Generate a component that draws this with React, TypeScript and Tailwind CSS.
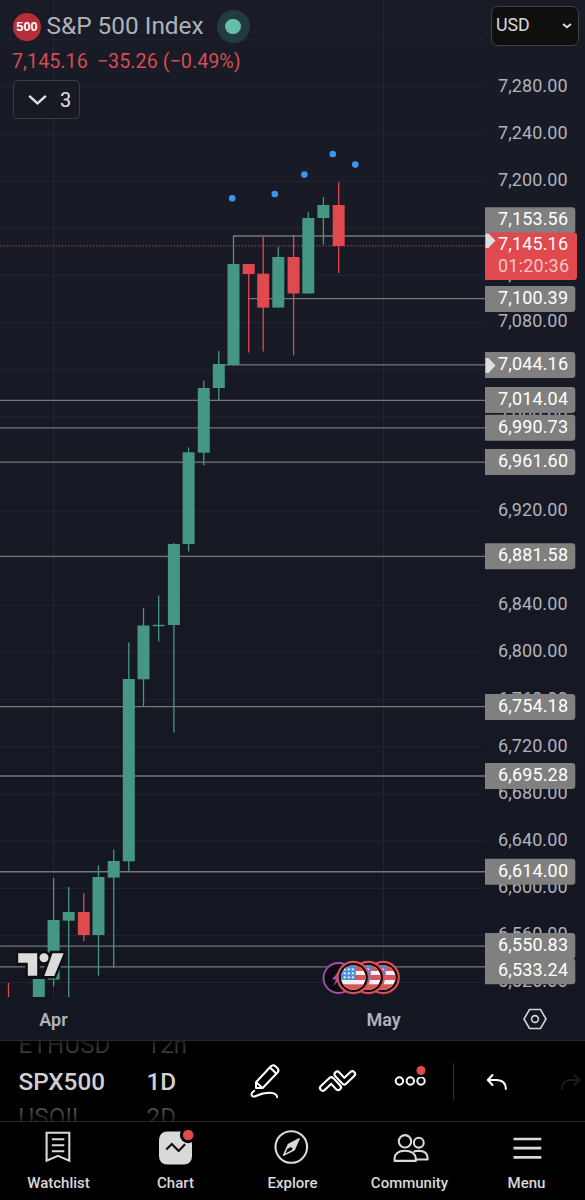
import type { ReactNode } from "react";

const UP = "#459782";
const DOWN = "#e0494e";

// price -> y on the plot
const priceY = (price: number) => 87 + (7280 - price) * 1.1783;

const ticks = Array.from({ length: 20 }, (_, i) => 7280 - i * 40);

// x, high, body top, body bottom, low, falling
type Candle = [number, number, number, number, number, boolean?];

const candles: Candle[] = [
  [8.5, 983, 983, 983, 997, true],
  [38.8, 979, 979, 997, 997],
  [53.6, 878, 920, 979.6, 986.5],
  [68.7, 887, 912, 920.7, 997],
  [83.8, 893, 912, 935, 941, true],
  [98.5, 865.5, 877, 935, 975.5],
  [113.7, 849.5, 861, 877.6, 967.5],
  [128.8, 642.5, 679, 861.3, 871],
  [143.5, 608, 625.5, 679.3, 706],
  [158.7, 595.5, 624.8, 626.2, 641.5],
  [173.9, 543, 544, 625, 732.5],
  [188.6, 447.5, 452.3, 544, 551.5],
  [203.8, 380.5, 388, 452.7, 465.5],
  [218.8, 351, 364, 388, 400.5],
  [233.5, 236, 264, 365, 366],
  [248.7, 264, 264, 274, 352.5, true],
  [263.2, 236.5, 273.7, 307.6, 351.5, true],
  [278.3, 247, 257, 307.6, 307.6],
  [293.6, 235, 257, 293.5, 355.3, true],
  [308.3, 212, 218, 293.5, 293.5],
  [323.4, 197, 205, 218, 244.5],
  [338.7, 182.3, 205, 246, 273, true],
];

// price, label top, line start
const levels: [number, number, number][] = [
  [7153.56, 207.3, 233],
  [7100.39, 286, 248],
  [7044.16, 352, 221],
  [7014.04, 387, 0],
  [6990.73, 414.7, 0],
  [6961.6, 449, 0],
  [6881.58, 543.3, 0],
  [6754.18, 694, 0],
  [6695.28, 763, 0],
  [6614, 858.8, 0],
  [6550.83, 933, 0],
  [6533.24, 958.3, 0],
];

const dots = [
  [232.2, 198.2],
  [274.8, 194],
  [304.4, 174.6],
  [332.8, 154],
  [355.3, 164.6],
];

const fmt = (n: number) =>
  n.toLocaleString("en-US", { minimumFractionDigits: 2, maximumFractionDigits: 2 });

function Flag({ x }: { x: number }) {
  return (
    <g transform={`translate(${x} 977.5)`}>
      <circle r="15.6" fill="#0b0b0f" stroke="#dc4f55" strokeWidth="2.1" />
      <g clipPath="url(#flag)">
        <rect x="-13" y="-13" width="26" height="26" fill="#f1f1f3" />
        <rect x="-13" y="-13" width="26" height="6.5" fill="#d9545b" />
        <rect x="-13" y="-2.5" width="26" height="5" fill="#d9545b" />
        <rect x="-13" y="6.8" width="26" height="7" fill="#d9545b" />
        <rect x="-13" y="-13" width="15.5" height="15.5" fill="#4a8fdc" />
        {[-8.7, -4.6, -0.5].map((sx) =>
          [-8.2, -4.2, -0.2].map((sy) => (
            <rect key={`${sx}${sy}`} x={sx - 1} y={sy - 0.8} width="2" height="1.8" fill="#fff" />
          ))
        )}
      </g>
    </g>
  );
}

function PriceChart() {
  return (
    <svg width="585" height="998" viewBox="0 0 585 998" className="block font-[Roboto,sans-serif]">
      <defs>
        <clipPath id="flag">
          <circle r="12.3" />
        </clipPath>
      </defs>

      <g stroke="#232631" strokeWidth="1">
        {[7320, ...ticks].map((p) => (
          <line key={p} x1="0" x2="484" y1={priceY(p)} y2={priceY(p)} />
        ))}
        <line x1="53.5" x2="53.5" y1="0" y2="997" />
        <line x1="383.5" x2="383.5" y1="0" y2="997" />
      </g>

      {levels.map(([p, , x]) => (
        <line key={p} x1={x} x2="485" y1={priceY(p)} y2={priceY(p)} stroke="#75777b" strokeWidth="1.3" />
      ))}
      <line x1="0" x2="485" y1="245.8" y2="245.8" stroke="#a44249" strokeWidth="1.3" strokeDasharray="1.3 1.8" />

      {candles.map(([x, high, top, bottom, low, falling]) => (
        <g key={x} fill={falling ? DOWN : UP}>
          <rect x={x - 0.65} y={high} width="1.3" height={low - high} />
          <rect x={x - 6} y={top} width="12" height={bottom - top} />
        </g>
      ))}

      {dots.map(([x, y]) => (
        <circle key={x} cx={x} cy={y} r="3.3" fill="#3b94f5" />
      ))}

      {/* brand mark */}
      <g stroke="#0f0f0f" strokeWidth="5">
        <path d="M18.2 953.3H37.2V975.8H27.8V962.8H18.2Z" />
        <path d="M51.7 953.3H63.5L54.2 976H44.3Z" />
        <circle cx="44" cy="957.8" r="4.5" />
      </g>
      <g fill="#dcdcdc">
        <path d="M18.2 953.3H37.2V975.8H27.8V962.8H18.2Z" />
        <path d="M52.5 953.3H63.7L54.2 976H44.3Z" />
        <circle cx="44" cy="957.8" r="4.5" />
      </g>

      {/* events */}
      <circle cx="338.5" cy="978" r="15" fill="#0b0b0f" stroke="#a450b4" strokeWidth="1.8" />
      <path d="M339 970.5L332 979.5H336L333.5 986L341 977.5H337.5Z" fill="#a450b4" />
      <Flag x={383.2} />
      <Flag x={368.3} />
      <Flag x={353.3} />

      <g fontSize="18" fill="#b0b2ba">
        {ticks.map((p) => (
          <text key={p} x="498" y={priceY(p) + 4.8} textLength="69.5">
            {fmt(p)}
          </text>
        ))}
      </g>

      {levels.map(([p, y]) => (
        <g key={p}>
          <path d={`M485 ${y}H572Q575.3 ${y} 575.3 ${y + 3}V${y + 23}Q575.3 ${y + 26} 572 ${y + 26}H485Z`} fill="#808080" />
          <text x="498" y={y + 17.8} fontSize="18" fill="#fff" textLength="70">
            {fmt(p)}
          </text>
        </g>
      ))}

      <path d="M485 232.5H574Q577 232.5 577 235.5V277Q577 280 574 280H485Z" fill={DOWN} />
      <g fontSize="18">
        <text x="498" y="250.2" fill="#fff" textLength="70">7,145.16</text>
        <text x="498" y="271.7" fill="#f5c4c6" textLength="71">01:20:36</text>
      </g>
      <path d="M485.5 233.5H488.5L495.5 240.5L488.5 248H485.5Z" fill="#dedede" />
      <path d="M485.5 358H488.5L495.5 365.5L488.5 373H485.5Z" fill="#dedede" />
    </svg>
  );
}

function Header() {
  return (
    <div className="absolute inset-x-0 top-0">
      <div className="flex h-[53px] items-center pl-[13px]">
        <div className="grid size-7 place-items-center rounded-full bg-[#b62f38] text-[12.8px] font-bold text-white">
          <span className="font-['Liberation_Sans',sans-serif]">500</span>
        </div>
        <div className="ml-[5.5px] w-[158px] text-[24.4px] leading-none whitespace-nowrap text-[#afb1b9]">
          S&amp;P 500 Index
        </div>
        <div className="ml-[12px] grid size-[33px] place-items-center rounded-full bg-[#233b40]">
          <div className="size-[15.5px] rounded-full bg-[#66bea8]" />
        </div>
      </div>
      <div className="flex h-[18px] items-center gap-[9px] pl-3 text-[19.8px] leading-none whitespace-nowrap text-[#d74b52]">
        <span>7,145.16</span>
        <span>−35.26 (−0.49%)</span>
      </div>
      <button className="mt-[9px] ml-[13px] flex h-[39px] w-[67px] items-center rounded-[5px] border border-[#3a3c43] bg-[#171a23] pl-[14px] text-[20px] text-[#e2e2e4]">
        <svg width="20" height="12" viewBox="0 0 20 12" fill="none" stroke="currentColor" strokeWidth="2.4">
          <path d="M1.2 1.8L9.5 9.3L17.8 1.8" />
        </svg>
        <span className="ml-[12px]">3</span>
      </button>
      <button className="absolute top-[6px] right-[6px] flex h-[40px] w-[88.5px] items-center justify-between rounded-[7px] border-[1.5px] border-[#414144] bg-[#0f0f0f] pr-[6px] pb-px pl-[4.5px] text-[17.8px] text-[#dbdbdb]">
        USD
        <svg width="10" height="6" viewBox="0 0 10 6" fill="none" stroke="currentColor" strokeWidth="1.9">
          <path d="M1 1L5 4.3L9 1" />
        </svg>
      </button>
    </div>
  );
}

function TimeAxis() {
  return (
    <div className="flex h-[42px] items-center text-[18px] font-semibold text-[#b0b2ba]">
      <span className="w-[107px] text-center">Apr</span>
      <span className="ml-[223px] w-[107px] text-center">May</span>
      <svg width="24" height="22" viewBox="0 0 24 22" fill="none" stroke="#d3d5da" strokeWidth="1.6" className="ml-[86px]">
        <path d="M6.5 1.5H17.5L23 11L17.5 20.5H6.5L1 11Z" />
        <circle cx="12" cy="11" r="3.4" />
      </svg>
    </div>
  );
}

function Wheel({ items, className }: { items: string[]; className: string }) {
  return (
    <div className={`flex h-20 flex-col justify-center overflow-hidden text-[24.3px] ${className}`}>
      <span className="h-[36.7px] shrink-0 bg-linear-to-b from-[#1c1c1c] from-40% to-[#5a5a5a] bg-clip-text leading-[37.7px] text-transparent">{items[0]}</span>
      <span className="h-[36.7px] shrink-0 leading-[37.7px] font-medium text-[#cfcfcf]">{items[1]}</span>
      <span className="h-[36.7px] shrink-0 bg-linear-to-b from-[#5a5a5a] from-20% to-[#1c1c1c] to-60% bg-clip-text leading-[36.7px] text-transparent">{items[2]}</span>
    </div>
  );
}

function Toolbar() {
  return (
    <div className="flex h-[82px] items-center border-y border-[#292929] bg-black">
      <Wheel items={["ETHUSD", "SPX500", "USOIL"]} className="ml-[18.5px] w-32" />
      <Wheel items={["12h", "1D", "2D"]} className="w-[95px]" />
      {/* pencil, zigzag pattern, more, undo, redo */}
      <svg width="343" height="80" viewBox="242 1041 343 80" fill="none" stroke="#fff" strokeWidth="2" strokeLinejoin="round" strokeLinecap="round">
        <path d="M256 1082.3L270.7 1066.5Q273 1064.1 275.4 1066.2L277.3 1067.9Q279.6 1070.1 277.5 1072.5L262.7 1088H256Z" />
        <path d="M256.5 1082.5L262.3 1087.7M270 1067.5L276 1073.3" />
        <path d="M254.2 1090.8Q251 1092.6 251.6 1095Q252.3 1097.6 256 1096Q263.5 1092.7 270 1092.8Q276.5 1093 277.2 1097.2" />
        <path d="M322.8 1088L331.3 1080L338.2 1087.3" strokeWidth="7.6" />
        <path d="M322.8 1088L331.3 1080L338.2 1087.3" stroke="#000" strokeWidth="3.4" />
        <path d="M337.3 1074.3L344.2 1081.7L352.3 1074" strokeWidth="7.6" />
        <path d="M337.3 1074.3L344.2 1081.7L352.3 1074" stroke="#000" strokeWidth="3.4" />
        <circle cx="399.4" cy="1081" r="3.7" />
        <circle cx="410.3" cy="1081" r="3.7" />
        <circle cx="421" cy="1081" r="3.7" />
        <circle cx="421" cy="1070.5" r="6.8" fill="#000" stroke="none" />
        <circle cx="421" cy="1070.5" r="4.5" fill={DOWN} stroke="none" />
        <path d="M453.6 1063.5V1099" stroke="#2b2b2b" strokeWidth="1.2" />
        <path d="M492.5 1075L487.8 1080L492.5 1085M488 1080H496Q505.8 1080 505.8 1089" />
        <path d="M574.5 1075L579.2 1080L574.5 1085M579 1080H571Q562 1080 562 1089" stroke="#1c1c1c" />
      </svg>
    </div>
  );
}

function NavItem({ label, children }: { label: string; children: ReactNode }) {
  return (
    <button className="flex flex-col items-center text-[15px] font-medium text-[#d9d9d9]">
      <svg width="44" height="50" viewBox="0.7 0 44 50" fill="none" stroke="currentColor" strokeWidth="2.1">
        {children}
      </svg>
      <span className="leading-[23px]">{label}</span>
    </button>
  );
}

function BottomNav() {
  return (
    <nav className="grid h-[78px] grid-cols-5 bg-black">
      <NavItem label="Watchlist">
        <path d="M10.3 10.8H33V38.7L21.7 33.8L10.3 38.7Z" />
        <path d="M15.5 17.3H28M15.5 23.3H28M15.5 29.3H28" />
      </NavItem>
      <NavItem label="Chart">
        <rect x="5.7" y="9.5" width="33" height="33" rx="8" fill="#d9d9d9" stroke="none" />
        <path d="M13 27.5L18.5 22L25.3 29L31.8 22.3" stroke="#0f0f0f" strokeWidth="2.2" />
        <circle cx="34.9" cy="13" r="8.3" fill="#000" stroke="none" />
        <circle cx="34.9" cy="13" r="5.3" fill={DOWN} stroke="none" />
      </NavItem>
      <NavItem label="Explore">
        <circle cx="21" cy="25" r="15.8" />
        <path d="M28.7 16.9L23.9 27.7L13.4 33.1L18.2 22.4Z" strokeWidth="1.6" strokeLinejoin="round" />
        <path d="M28.7 16.9L18.2 22.4L16 27.4L20.2 25.2Q22.6 25 22 27.7L21.7 28.9L23.9 27.7Z" fill="currentColor" stroke="none" />
      </NavItem>
      <NavItem label="Community">
        <circle cx="17.7" cy="19.3" r="6.2" />
        <circle cx="31.5" cy="20.7" r="4.9" />
        <path d="M7.3 38.9V36.5Q8 28.8 17.5 28.8Q27.5 28.8 28.5 36.5V38.9Z" strokeLinejoin="round" />
        <path d="M26.2 29.8Q28.5 28.8 31.3 28.8Q40 29 40.3 35.7V37.5H28.5" strokeLinejoin="round" />
      </NavItem>
      <NavItem label="Menu">
        <path d="M9.2 17H37M9.2 26.2H37M9.2 35.4H37" strokeWidth="2.7" />
      </NavItem>
    </nav>
  );
}

export default function App() {
  return (
    <div className="flex h-[1200px] w-[585px] flex-col overflow-hidden bg-black font-[Roboto,sans-serif]">
      <main className="relative h-[1040px] bg-linear-to-b from-[#191b26] to-[#141621]">
        <PriceChart />
        <Header />
        <TimeAxis />
      </main>
      <Toolbar />
      <BottomNav />
    </div>
  );
}
